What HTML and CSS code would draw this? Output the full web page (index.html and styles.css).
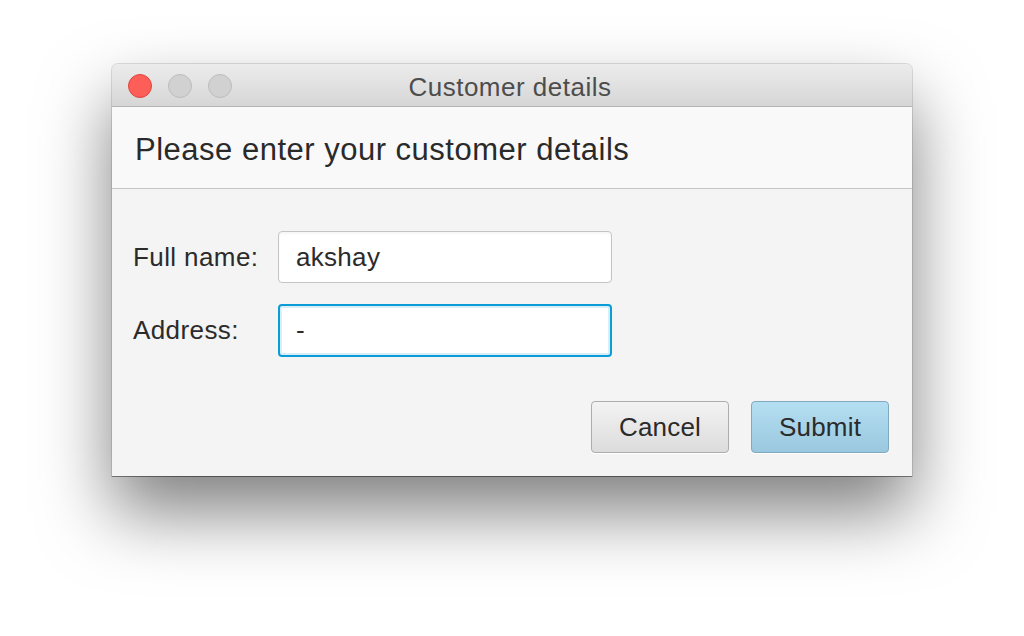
FILE: index.html
```html
<!DOCTYPE html>
<html>
<head>
<meta charset="utf-8">
<link rel="stylesheet" href="styles.css">
</head>
<body>
<div class="window">
  <div class="titlebar">
    <div class="lights">
      <span class="light close"></span>
      <span class="light"></span>
      <span class="light"></span>
    </div>
    <div class="title">Customer details</div>
  </div>
  <div class="header">Please enter your customer details</div>
  <div class="content">
    <div class="form">
      <label class="label">Full name:</label>
      <div class="field">akshay</div>
      <label class="label">Address:</label>
      <div class="field focused">-</div>
    </div>
    <div class="actions">
      <button class="btn">Cancel</button>
      <button class="btn primary">Submit</button>
    </div>
  </div>
</div>
</body>
</html>
```

FILE: styles.css
```css
html, body {
  margin: 0;
  padding: 0;
  background: #ffffff;
}
body {
  width: 1024px;
  height: 636px;
  overflow: hidden;
  font-family: "Liberation Sans", Arial, sans-serif;
  color: #2b2b2b;
}
.window {
  margin: 64px 0 0 112px;
  width: 800px;
  height: 412px;
  border-radius: 6px 6px 0 0;
  background: #f4f4f4;
  box-shadow: 0 36px 70px rgba(0,0,0,0.5), 0 0 0 1px rgba(0,0,0,0.12), 0 1px 0 rgba(0,0,0,0.35);
  display: flex;
  flex-direction: column;
  overflow: hidden;
}
.titlebar {
  position: relative;
  height: 42px;
  flex: none;
  background: linear-gradient(#ececec, #d6d6d6);
  border-bottom: 1px solid #b4b4b4;
  display: flex;
  align-items: center;
  justify-content: center;
}
.lights {
  position: absolute;
  left: 16px;
  top: 10px;
  display: flex;
  gap: 16px;
}
.light {
  width: 22px;
  height: 22px;
  border-radius: 50%;
  background: #d1d1d1;
  border: 1px solid #bdbdbd;
}
.light.close {
  background: #fd5e57;
  border-color: #e0443e;
}
.title {
  font-size: 26px;
  letter-spacing: 0.5px;
  color: #4d4d4d;
  margin-left: -4px;
  padding-top: 4px;
}
.header {
  flex: none;
  height: 82px;
  box-sizing: border-box;
  border-bottom: 1px solid #c6c6c6;
  background: #f9f9f9;
  display: flex;
  align-items: center;
  padding-left: 23px;
  padding-top: 5px;
  font-size: 31px;
  letter-spacing: 0.5px;
  color: #2a2a2a;
}
.content {
  flex: 1;
  padding: 42px 23px 23px 21px;
  display: flex;
  flex-direction: column;
}
.form {
  display: grid;
  grid-template-columns: 145px 334px;
  grid-auto-rows: 52px;
  row-gap: 21px;
  align-items: center;
}
.label {
  font-size: 26px;
  letter-spacing: 0.4px;
  color: #2b2b2b;
}
.field {
  height: 52px;
  box-sizing: border-box;
  border: 1px solid #c4c4c4;
  border-radius: 4px;
  background: #ffffff;
  box-shadow: inset 0 2px 3px rgba(0,0,0,0.04);
  padding-left: 17px;
  display: flex;
  align-items: center;
  font-size: 26px;
  letter-spacing: 0.3px;
  color: #2b2b2b;
}
.field.focused {
  border: 2px solid #0a9cd6;
  box-shadow: inset 0 0 0 2px #daeef8;
  padding-left: 16px;
  height: 53px;
}
.actions {
  margin-top: 45px;
  display: flex;
  justify-content: flex-end;
  gap: 22px;
}
.btn {
  width: 138px;
  height: 52px;
  border-radius: 4px;
  border: 1px solid #adadad;
  background: linear-gradient(#f3f3f3, #dcdcdc);
  box-shadow: 0 1px 0 #ffffff;
  font-family: "Liberation Sans", Arial, sans-serif;
  font-size: 26px;
  letter-spacing: 0.2px;
  color: #2b2b2b;
  padding: 0;
}
.btn.primary {
  border-color: #80a8bf;
  background: linear-gradient(#b5def1, #9ac8df);
}
```
